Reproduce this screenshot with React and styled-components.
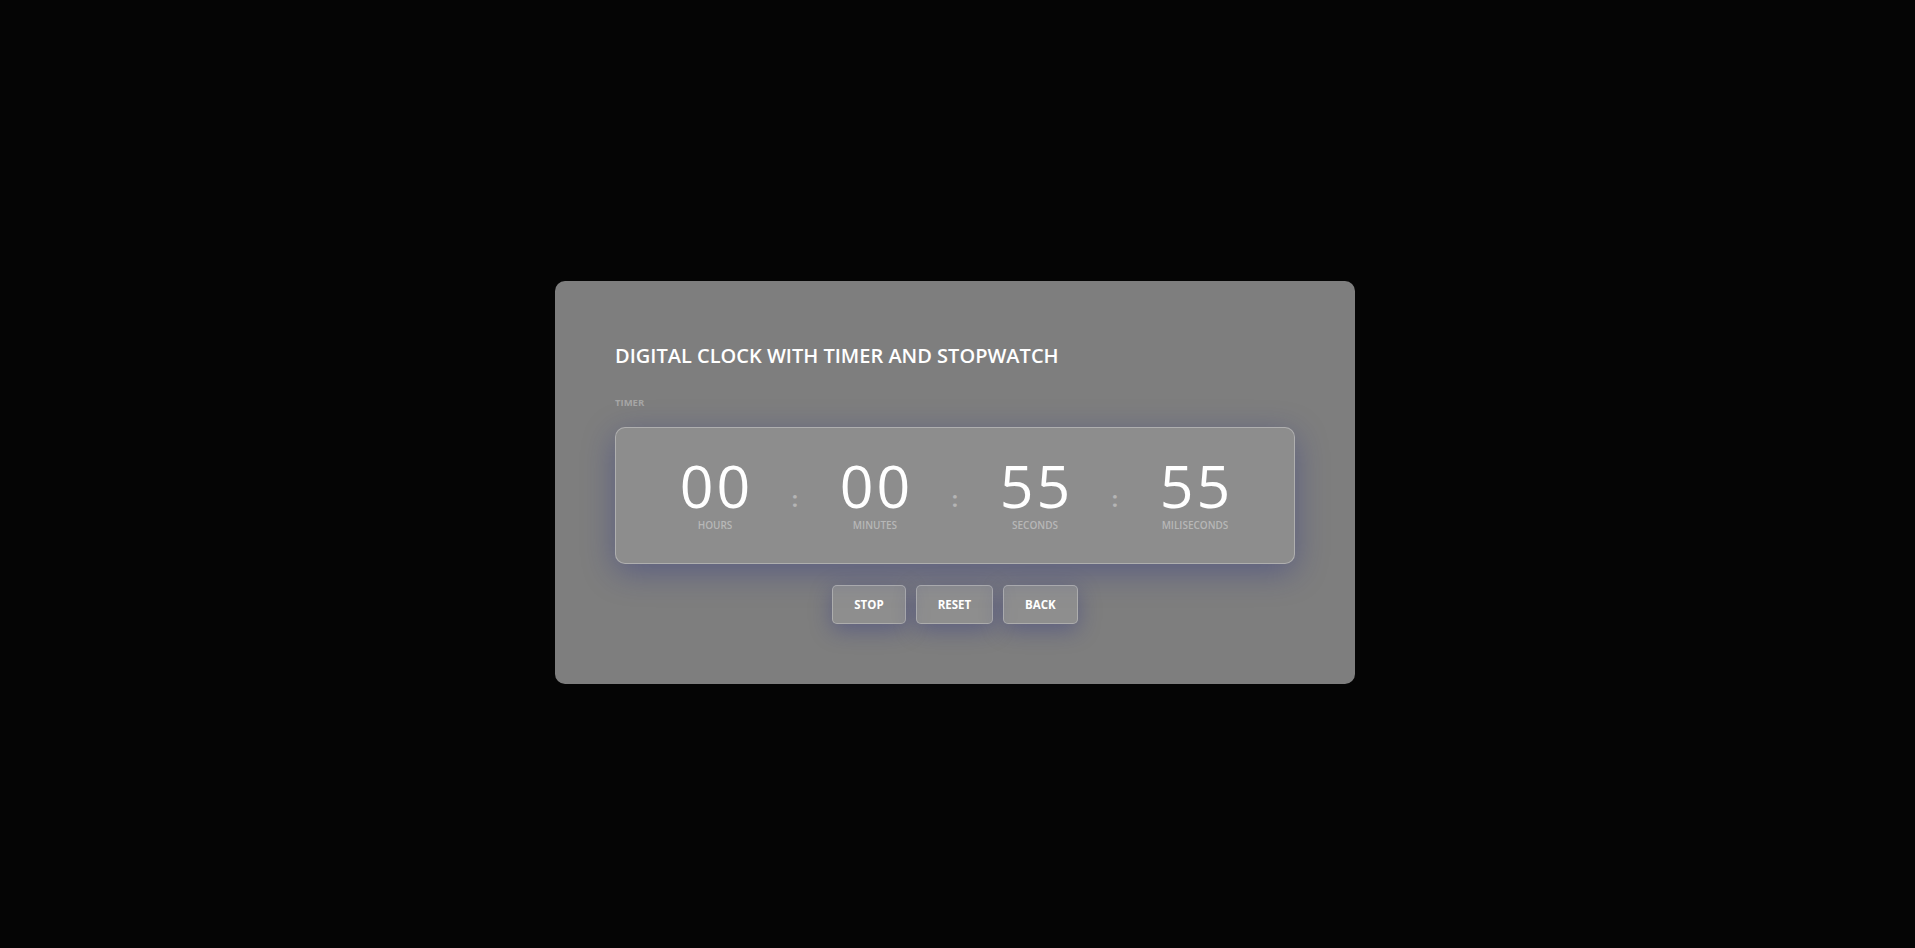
import React from "react";
import styled, { createGlobalStyle } from "styled-components";

const GlobalStyle = createGlobalStyle`
  * {
    box-sizing: border-box;
  }

  body {
    margin: 0;
    background: #050505;
    font-family: "Open Sans", "Liberation Sans", sans-serif;
  }
`;

const Page = styled.div`
  min-height: 100vh;
  padding: 16px 5px 0 0;
  display: flex;
  align-items: center;
  justify-content: center;
`;

const Card = styled.div`
  width: 800px;
  padding: 60px;
  background: rgba(255, 255, 255, 0.485);
  border-radius: 10px;
`;

const Title = styled.h1`
  margin: 0;
  font-size: 20px;
  font-weight: 600;
  line-height: 30px;
  color: #fff;
`;

const Label = styled.div`
  margin-top: 25px;
  font-size: 9.5px;
  font-weight: 700;
  line-height: 14px;
  color: rgba(255, 255, 255, 0.33);
`;

const Display = styled.div`
  margin-top: 17px;
  height: 137px;
  padding-bottom: 3px;
  display: flex;
  align-items: center;
  justify-content: center;
  background: rgba(255, 255, 255, 0.12);
  border: 1px solid rgba(255, 255, 255, 0.3);
  border-radius: 10px;
  box-shadow: 0 8px 32px rgba(31, 38, 135, 0.37);
`;

const Unit = styled.div`
  width: 100px;
  display: flex;
  flex-direction: column;
  align-items: center;
`;

const Digits = styled.span`
  font-size: 59px;
  font-weight: 400;
  line-height: 60px;
  letter-spacing: 3px;
  margin-right: -3px;
  color: #fff;
`;

const UnitName = styled.span`
  margin-top: 3px;
  font-size: 10px;
  font-weight: 600;
  line-height: 14px;
  color: rgba(255, 255, 255, 0.38);
`;

const Colon = styled.span`
  width: 60px;
  text-align: center;
  font-size: 22px;
  font-weight: 700;
  color: rgba(255, 255, 255, 0.35);
  padding-top: 8px;
`;

const Controls = styled.div`
  margin-top: 21px;
  display: flex;
  justify-content: center;
  gap: 10px;
`;

const Button = styled.button`
  height: 39px;
  padding: 0 21px;
  font-family: inherit;
  font-size: 11.5px;
  font-weight: 700;
  color: #fff;
  background: rgba(255, 255, 255, 0.13);
  border: 1px solid rgba(255, 255, 255, 0.28);
  border-radius: 5px;
  box-shadow: 0 6px 22px rgba(31, 38, 135, 0.35);
  cursor: pointer;
`;

const units = [
  { value: "00", name: "HOURS" },
  { value: "00", name: "MINUTES" },
  { value: "55", name: "SECONDS" },
  { value: "55", name: "MILISECONDS" },
];

const App = () => {
  return (
    <>
      <GlobalStyle />
      <Page>
        <Card>
          <Title>DIGITAL CLOCK WITH TIMER AND STOPWATCH</Title>
          <Label>TIMER</Label>
          <Display>
            {units.map((unit, index) => (
              <React.Fragment key={unit.name}>
                {index > 0 && <Colon>:</Colon>}
                <Unit>
                  <Digits>{unit.value}</Digits>
                  <UnitName>{unit.name}</UnitName>
                </Unit>
              </React.Fragment>
            ))}
          </Display>
          <Controls>
            <Button>STOP</Button>
            <Button>RESET</Button>
            <Button>BACK</Button>
          </Controls>
        </Card>
      </Page>
    </>
  );
};

export default App;
